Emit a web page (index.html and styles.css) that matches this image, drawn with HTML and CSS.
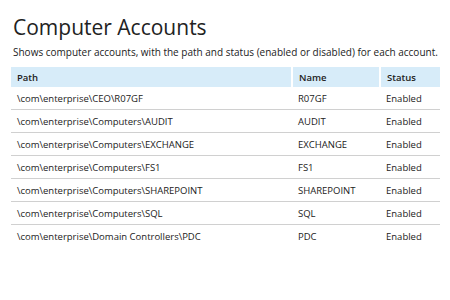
FILE: index.html
```html
<!DOCTYPE html>
<html lang="en">
<head>
    <meta charset="UTF-8">
    <title>Computer Accounts</title>
    <link rel="stylesheet" href="styles.css">
</head>
<body>
    <div class="report">
        <h1>Computer Accounts</h1>
        <p class="intro">Shows computer accounts, with the path and status (enabled or disabled) for each account.</p>

        <table class="grid">
            <thead>
                <tr>
                    <th class="col-path">Path</th>
                    <th class="col-name">Name</th>
                    <th class="col-status">Status</th>
                </tr>
            </thead>
            <tbody>
                <tr><td>\com\enterprise\CEO\R07GF</td><td>R07GF</td><td>Enabled</td></tr>
                <tr><td>\com\enterprise\Computers\AUDIT</td><td>AUDIT</td><td>Enabled</td></tr>
                <tr><td>\com\enterprise\Computers\EXCHANGE</td><td>EXCHANGE</td><td>Enabled</td></tr>
                <tr><td>\com\enterprise\Computers\FS1</td><td>FS1</td><td>Enabled</td></tr>
                <tr><td>\com\enterprise\Computers\SHAREPOINT</td><td>SHAREPOINT</td><td>Enabled</td></tr>
                <tr><td>\com\enterprise\Computers\SQL</td><td>SQL</td><td>Enabled</td></tr>
                <tr><td>\com\enterprise\Domain Controllers\PDC</td><td>PDC</td><td>Enabled</td></tr>
            </tbody>
        </table>
    </div>
</body>
</html>
```

FILE: styles.css
```css
body {
    margin: 0;
    font-family: 'Open Sans', sans-serif;
    background-color: #fff;
    color: #222;
}
.report {
    padding: 13px 10px 0 11px;
}
h1 {
    margin: 0 0 0 2px;
    font-size: 21px;
    font-weight: 400;
    line-height: 28px;
    color: #222;
}
.intro {
    margin: 4px 0 8px 2px;
    font-size: 10px;
    line-height: 14px;
    color: #222;
}
.grid {
    width: 429px;
    border-collapse: collapse;
    font-size: 9.5px;
}
.grid th {
    background-color: #d7ecf9;
    border-right: 2px solid #fff;
    text-align: left;
    font-weight: 600;
    height: 20px;
    padding: 0 6px;
}
.grid th:last-child {
    border-right: none;
}
.col-path {
    width: 268px;
}
.col-name {
    width: 74px;
}
.grid td {
    height: 22px;
    padding: 0 6px;
    border-bottom: 1px solid #d0d0d0;
}
.grid tbody tr:last-child td {
    border-bottom: none;
}
```
